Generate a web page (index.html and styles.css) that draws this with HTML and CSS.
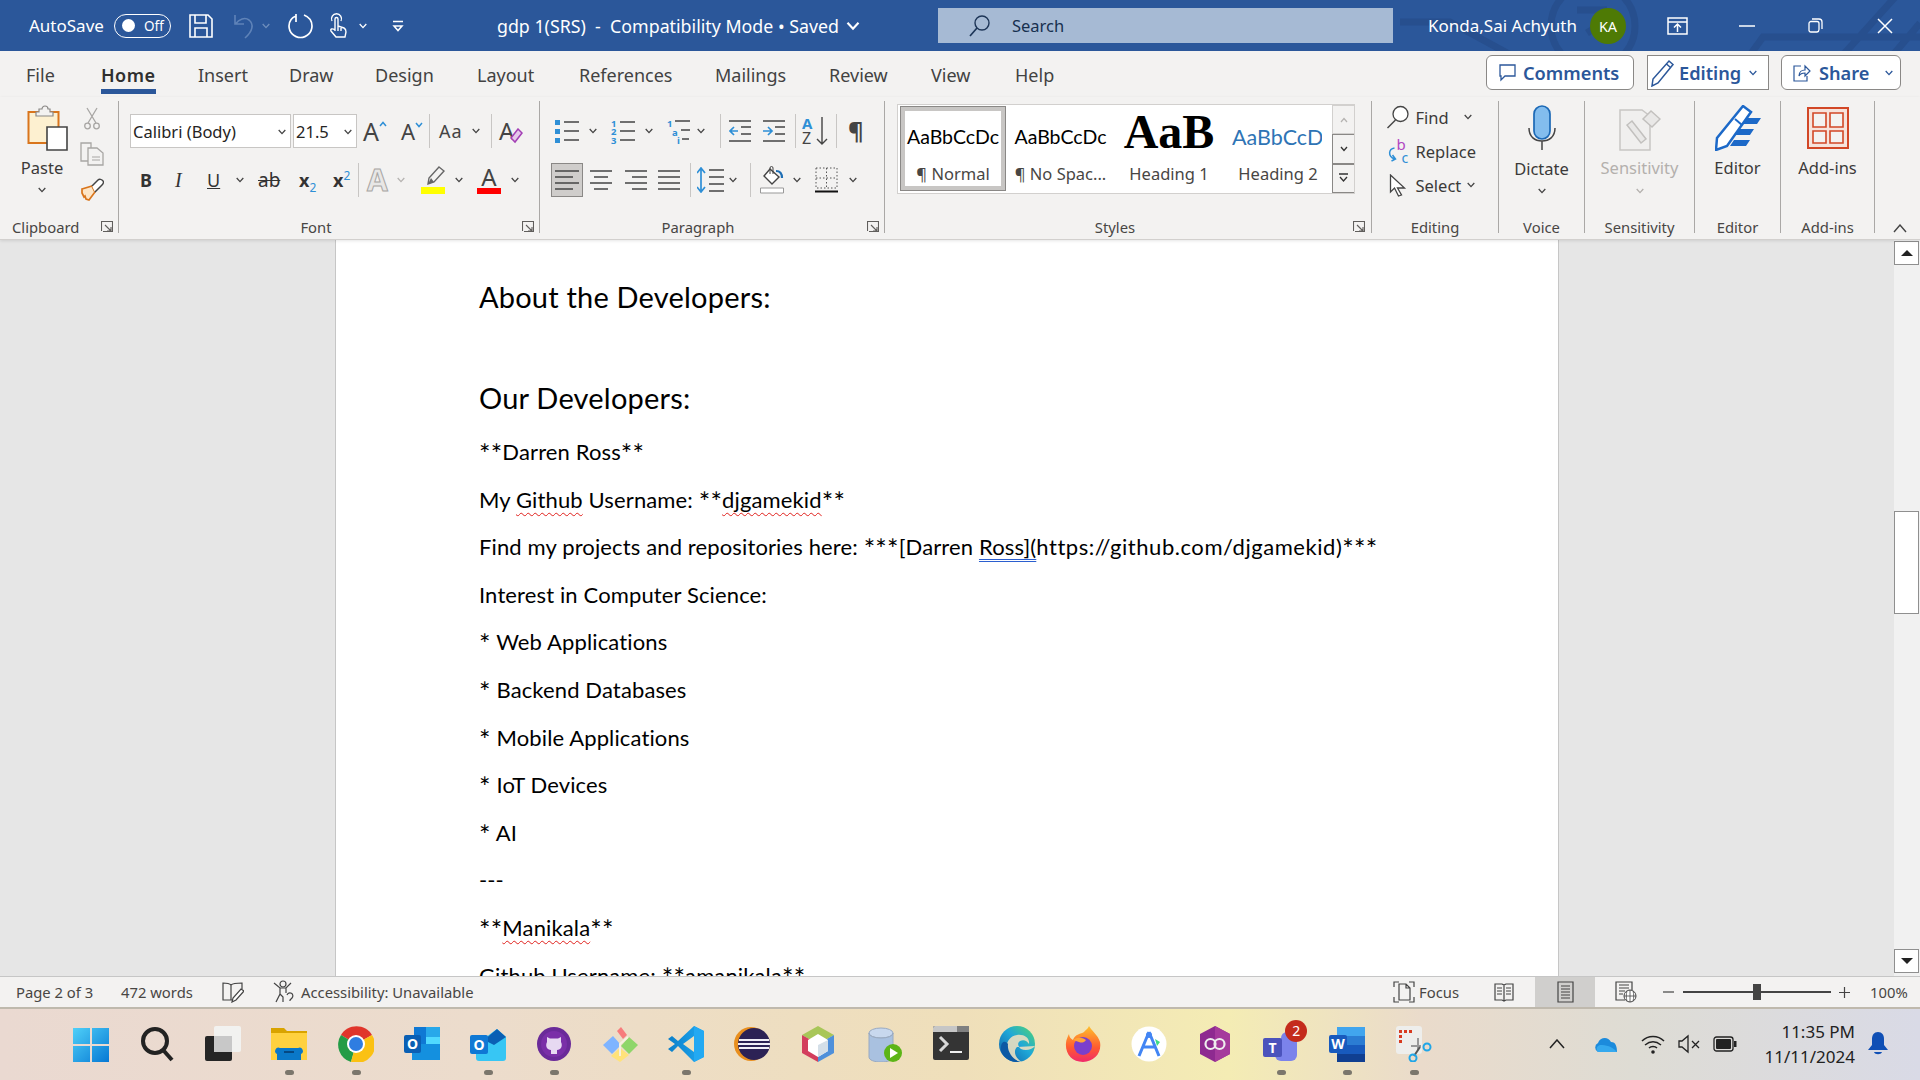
FILE: index.html
```html
<!DOCTYPE html>
<html lang="en">
<head>
<meta charset="utf-8">
<title>gdp 1(SRS) - Word</title>
<link rel="stylesheet" href="styles.css">
</head>
<body>
<svg class="defs" width="0" height="0" aria-hidden="true">
  <defs>
    <symbol id="chev" viewBox="0 0 8 6"><path d="M.7 1 4 4.6 7.3 1" fill="none" stroke="currentColor" stroke-width="1.3"/></symbol>
    <symbol id="launch" viewBox="0 0 12 11"><path d="M.5 10V.5h11M4 .5h7.5V10.500H2M4 4l6 6M10 6v4H6" fill="none" stroke="#605e5c" stroke-width="1.1"/></symbol>
    <linearGradient id="winG" x1="0" y1="0" x2="1" y2="1"><stop offset="0" stop-color="#4fd0f8"/><stop offset="1" stop-color="#0678d4"/></linearGradient>
    <linearGradient id="vsG" x1="0" y1="0" x2="1" y2="0"><stop offset="0" stop-color="#0b7fc9"/><stop offset="1" stop-color="#1fa8f1"/></linearGradient>
    <linearGradient id="edgeG" x1="0" y1="1" x2="1" y2="0"><stop offset="0" stop-color="#0c59a4"/><stop offset=".55" stop-color="#1fa8d8"/><stop offset="1" stop-color="#52d66e"/></linearGradient>
    <linearGradient id="fxG" x1="0" y1="0" x2="0" y2="1"><stop offset="0" stop-color="#ffc02c"/><stop offset=".6" stop-color="#ff5a30"/><stop offset="1" stop-color="#f02a6b"/></linearGradient>
  </defs>
</svg>

<header class="titlebar">
  <svg class="watermark" width="920" height="51" viewBox="0 0 920 51" aria-hidden="true">
    <g fill="none" stroke="#274f8e" stroke-width="7">
      <path d="M400 22H450L520 60"/>
      <circle cx="593" cy="26" r="42"/>
      <path d="M577 10H607M587 33 610 18"/>
      <path d="M750 55 763 37H920M843 55 897-5M893 55 920 23"/>
    </g>
  </svg>
  <span class="tb-text">AutoSave</span>
  <span class="toggle"><i class="knob"></i><span class="toggle-label">Off</span></span>
  <svg width="24" height="24" viewBox="0 0 24 24"><path d="M1 1h18l4 4v18H1zM6 1v8h11V1M6 23v-9h12v9" fill="none" stroke="#fff" stroke-width="1.6"/></svg>
  <svg width="22" height="26" viewBox="0 0 22 26"><path d="M2 2v9h9M2.500 11C6 6 12 4 16 7c5 4 4 11-4 18" fill="none" stroke="#5f83b8" stroke-width="1.600"/></svg>
  <svg class="chev dim" width="8" height="6"><use href="#chev"/></svg>
  <svg width="25" height="26" viewBox="0 0 25 26"><path d="M8 3C3 5 1 9 1 13a11.500 11.500 0 1 0 23 0C24 8 21 4 16 2M8 1v8" fill="none" stroke="#fff" stroke-width="1.700"/></svg>
  <svg width="18" height="26" viewBox="0 0 18 26"><path d="M3 8a5 5 0 1 1 9 0M6 18V6a1.500 1.500 0 0 1 3 0v7l6 2c2 1 2 3 2 4l-1 5H7l-5-6c-1-2 1-3 4-1zM9 13v5M12 14v4" fill="none" stroke="#fff" stroke-width="1.400"/></svg>
  <svg class="chev" width="8" height="6"><use href="#chev"/></svg>
  <svg width="12" height="12" viewBox="0 0 12 12"><path d="M1 1.500h10M2 6l4 4.500L10 6z" fill="none" stroke="#fff" stroke-width="1.500"/></svg>
  <span class="doc-title">gdp 1(SRS)&nbsp; -&nbsp; Compatibility Mode • Saved <svg class="title-chev" width="16" height="10"><use href="#chev"/></svg></span>
  <div class="search">
    <svg width="21" height="24" viewBox="0 0 21 24"><circle cx="13" cy="9" r="7" fill="none" stroke="#1d3557" stroke-width="1.400"/><path d="M8 14 1 22" stroke="#1d3557" stroke-width="1.600"/></svg>
    <span>Search</span>
  </div>
  <span class="tb-text user">Konda,Sai Achyuth</span>
  <span class="avatar">KA</span>
  <svg width="21" height="18" viewBox="0 0 21 18"><path d="M1 1h19v16H1zM1 5h19M10.500 15V7.500M7 10.500l3.500-3.500 3.500 3.500" fill="none" stroke="#fff" stroke-width="1.500"/></svg>
  <svg width="16" height="2" viewBox="0 0 16 2"><path d="M0 1h16" stroke="#fff" stroke-width="1.500"/></svg>
  <svg width="15" height="15" viewBox="0 0 15 15"><path d="M1 5.500a2 2 0 0 1 2-2h6a2 2 0 0 1 2 2v6a2.500 2.500 0 0 1-2 2.500H3a2 2 0 0 1-2-2.500zM4 1h7a3 3 0 0 1 3 3v7" fill="none" stroke="#fff" stroke-width="1.300"/></svg>
  <svg width="16" height="16" viewBox="0 0 16 16"><path d="M1 1l14 14M15 1 1 15" stroke="#fff" stroke-width="1.500"/></svg>
</header>

<nav class="tabs">
  <span class="tab">File</span>
  <span class="tab tab-active">Home</span>
  <span class="tab">Insert</span>
  <span class="tab">Draw</span>
  <span class="tab">Design</span>
  <span class="tab">Layout</span>
  <span class="tab">References</span>
  <span class="tab">Mailings</span>
  <span class="tab">Review</span>
  <span class="tab">View</span>
  <span class="tab">Help</span>
  <button class="action action-comments"><svg width="17" height="18" viewBox="0 0 17 18"><path d="M1 1h15v11H6l-4 4v-4H1z" fill="none" stroke="#2b579a" stroke-width="1.300"/></svg>Comments</button>
  <button class="action action-editing"><svg width="24" height="28" viewBox="0 0 24 28"><path d="M18 2l4 3.500L7 24l-6 3 1-7zM15.500 5l4 3.500" fill="none" stroke="#2b579a" stroke-width="1.500"/></svg>Editing<svg class="chev" width="8" height="6"><use href="#chev"/></svg></button>
  <button class="action action-share"><svg width="18" height="18" viewBox="0 0 18 18"><path d="M8 2H1v15h13v-5M6 12c0-4 3-6 6-6V2l5 5-5 5V9c-3 0-5 1-6 3z" fill="none" stroke="#2b579a" stroke-width="1.200"/></svg>Share<svg class="chev share-chev" width="8" height="6"><use href="#chev"/></svg></button>
</nav>

<section class="ribbon">
  <div class="group g-clip">
    <div class="body clip-body">
      <div class="big paste">
        <svg class="paste-icon" width="41" height="46" viewBox="0 0 41 46"><path d="M1.500 7h30v31h-30z" fill="#fdf0d0" stroke="#d9751c" stroke-width="2"/><path d="M12 7V4h3a3 3 0 0 1 6 0h2v3h3v4H9V7z" fill="#f3f2f1" stroke="#8a8886" stroke-width="1.200"/><path d="M20 22h20v23H20z" fill="#fff" stroke="#444" stroke-width="1.600"/></svg>
        <span class="big-label">Paste</span>
        <svg class="chev" width="8" height="6"><use href="#chev"/></svg>
      </div>
      <div class="clip-small">
        <svg width="16" height="23" viewBox="0 0 16 23"><g fill="none" stroke="#a8a6a4" stroke-width="1.300"><path d="M3 1l9 15M13 1 4 16"/><circle cx="3.500" cy="19" r="2.800"/><circle cx="12.500" cy="19" r="2.800"/></g></svg>
        <svg width="24" height="24" viewBox="0 0 24 24"><g fill="#f3f2f1" stroke="#a8a6a4" stroke-width="1.300"><path d="M1 1h10v18H1z"/><path d="M8 6h9l6 5v12H8z"/></g><path d="M12 15h8M12 18h8" stroke="#a8a6a4"/></svg>
        <svg width="24" height="23" viewBox="0 0 24 23"><path d="M2 11l10-3 3 6-6 8-3-1-1-3-1 1-2-4z" fill="#fde6c8" stroke="#d9751c" stroke-width="1.700"/><path d="M12 8l6-6c1-1 4-1 5 1 1 1 0 3-1 4l-7 7" fill="#fff" stroke="#444" stroke-width="1.500"/></svg>
      </div>
    </div>
    <div class="label">Clipboard</div>
    <svg class="launch" width="12" height="11"><use href="#launch"/></svg>
  </div>

  <div class="group g-font">
    <div class="body">
      <div class="row font-row1">
        <div class="combo combo-font">Calibri (Body)<svg class="chev" width="8" height="6"><use href="#chev"/></svg></div>
        <div class="combo combo-size">21.5<svg class="chev" width="8" height="6"><use href="#chev"/></svg></div>
        <span class="grow-a">A<svg class="mini" width="8" height="6" viewBox="0 0 8 6"><path d="M1 5l3-3.500L7 5" fill="none" stroke="#2e8fd6" stroke-width="1.500"/></svg></span>
        <span class="shrink-a">A<svg class="mini" width="8" height="6" viewBox="0 0 8 6"><path d="M1 1l3 3.500L7 1" fill="none" stroke="#2e8fd6" stroke-width="1.500"/></svg></span>
        <i class="sep"></i>
        <span class="case">Aa</span>
        <svg class="chev" width="8" height="6"><use href="#chev"/></svg>
        <i class="sep"></i>
        <span class="clear"><span class="clear-a">A</span><svg width="14" height="16" viewBox="0 0 14 16"><path d="M9 1l4 4-7 9-4-4z" fill="#e5c8ea" stroke="#a33fb5" stroke-width="1.500"/></svg></span>
      </div>
      <div class="row font-row2">
        <b class="fmt">B</b>
        <i class="fmt fmt-i">I</i>
        <u class="fmt">U</u>
        <svg class="chev" width="8" height="6"><use href="#chev"/></svg>
        <s class="fmt fmt-ab">ab</s>
        <span class="fmt fmt-b">x<sub>2</sub></span>
        <span class="fmt fmt-b">x<sup>2</sup></span>
        <i class="sep"></i>
        <span class="fx-a">A</span>
        <svg class="chev dim2" width="8" height="6"><use href="#chev"/></svg>
        <svg width="24" height="28" viewBox="0 0 24 28"><path d="M18 1l5 4-10 11-6 2 1-6z" fill="none" stroke="#666" stroke-width="1.400"/><path d="M7 18l6-2-3-4z" fill="#666"/><path d="M0 21h24v7H0z" fill="#ffff00"/></svg>
        <svg class="chev" width="8" height="6"><use href="#chev"/></svg>
        <span class="color-a">A<i class="color-bar"></i></span>
        <svg class="chev" width="8" height="6"><use href="#chev"/></svg>
      </div>
    </div>
    <div class="label">Font</div>
    <svg class="launch" width="12" height="11"><use href="#launch"/></svg>
  </div>

  <div class="group g-para">
    <div class="body">
      <div class="row para-row1">
        <svg width="24" height="24" viewBox="0 0 24 24"><path d="M0 1h5v5H0zM0 10h5v5H0zM0 19h5v5H0z" fill="#2e8fd6"/><path d="M9 3h15M9 12h15M9 21h15" stroke="#444" stroke-width="1.400"/></svg>
        <svg class="chev" width="8" height="6"><use href="#chev"/></svg>
        <svg width="24" height="26" viewBox="0 0 24 26"><text x="0" y="9" class="mini-num">1</text><text x="0" y="17" class="mini-num">2</text><text x="0" y="26" class="mini-num">3</text><path d="M9 4h15M9 13h15M9 22h15" stroke="#444" stroke-width="1.400"/></svg>
        <svg class="chev" width="8" height="6"><use href="#chev"/></svg>
        <svg width="24" height="26" viewBox="0 0 24 26"><text x="0" y="9" class="mini-num">1</text><text x="5" y="18" class="mini-num">a</text><text x="10" y="26" class="mini-num">i</text><path d="M8 3h15M14 12h9M15 21h7" stroke="#444" stroke-width="1.400"/></svg>
        <svg class="chev" width="8" height="6"><use href="#chev"/></svg>
        <i class="sep"></i>
        <svg width="22" height="24" viewBox="0 0 22 24"><path d="M0 2h22M12 8h10M12 15h10M0 22h22" stroke="#444" stroke-width="1.400"/><path d="M9 12H1M5 8l-4 4 4 4" fill="none" stroke="#2e8fd6" stroke-width="1.700"/></svg>
        <svg width="22" height="24" viewBox="0 0 22 24"><path d="M0 2h22M12 8h10M12 15h10M0 22h22" stroke="#444" stroke-width="1.400"/><path d="M0 12h8M5 8l4 4-4 4" fill="none" stroke="#2e8fd6" stroke-width="1.700"/></svg>
        <i class="sep"></i>
        <svg width="26" height="30" viewBox="0 0 26 30"><text x="0" y="13" class="sort-a">A</text><text x="0" y="28" class="sort-z">Z</text><path d="M20 1v27M15 23l5 5 5-5" fill="none" stroke="#444" stroke-width="1.400"/></svg>
        <i class="sep"></i>
        <span class="pilcrow">¶</span>
      </div>
      <div class="row para-row2">
        <span class="align-on"><svg width="24" height="24" viewBox="0 0 24 24"><path d="M0 3h24M0 9h18M0 15h24M0 21h18" stroke="#444" stroke-width="1.400"/></svg></span>
        <svg width="22" height="24" viewBox="0 0 22 24"><path d="M0 3h22M4 9h14M0 15h22M4 21h14" stroke="#444" stroke-width="1.400"/></svg>
        <svg width="22" height="24" viewBox="0 0 22 24"><path d="M0 3h22M7 9h15M0 15h22M7 21h15" stroke="#444" stroke-width="1.400"/></svg>
        <svg width="22" height="24" viewBox="0 0 22 24"><path d="M0 3h22M0 9h22M0 15h22M0 21h22" stroke="#444" stroke-width="1.400"/></svg>
        <i class="sep"></i>
        <svg width="27" height="26" viewBox="0 0 27 26"><path d="M4 2v22M0 6l4-5 4 5M0 20l4 5 4-5" fill="none" stroke="#2e8fd6" stroke-width="1.700"/><path d="M12 3h15M12 10h15M12 17h15M12 24h15" stroke="#444" stroke-width="1.400"/></svg>
        <svg class="chev" width="8" height="6"><use href="#chev"/></svg>
        <i class="sep"></i>
        <svg width="24" height="28" viewBox="0 0 24 28"><path d="M10 3l9 8-7 7-8-8z" fill="#fff" stroke="#444" stroke-width="1.400"/><path d="M10 8V2a1.500 1.500 0 0 1 3 0v6" fill="none" stroke="#444"/><path d="M16 5c4 0 6 2 6 7" fill="none" stroke="#1f6fb5" stroke-width="2.200"/><path d="M.5 22h23v5H.5z" fill="#fff" stroke="#999"/></svg>
        <svg class="chev" width="8" height="6"><use href="#chev"/></svg>
        <svg width="23" height="28" viewBox="0 0 23 28"><path d="M1 2h21v20H1zM11.500 2v20M1 12h21" fill="none" stroke="#555" stroke-dasharray="1.500 2"/><path d="M0 25.500h23" stroke="#111" stroke-width="2"/></svg>
        <svg class="chev" width="8" height="6"><use href="#chev"/></svg>
      </div>
    </div>
    <div class="label">Paragraph</div>
    <svg class="launch" width="12" height="11"><use href="#launch"/></svg>
  </div>

  <div class="group g-styles">
    <div class="body">
      <div class="gallery">
        <div class="style style-normal">
          <span class="sample s-normal">AaBbCcDc</span>
          <span class="style-name">¶ Normal</span>
        </div>
        <div class="style style-nospace">
          <span class="sample s-normal">AaBbCcDc</span>
          <span class="style-name">¶ No Spac...</span>
        </div>
        <div class="style style-h1">
          <span class="sample s-h1">AaB</span>
          <span class="style-name">Heading 1</span>
        </div>
        <div class="style style-h2">
          <span class="sample s-h2">AaBbCcDc</span>
          <span class="style-name">Heading 2</span>
        </div>
        <div class="gallery-scroll">
          <span class="gs gs-up"><svg width="10" height="6" viewBox="0 0 8 6"><path d="M1 5l3-3.500L7 5" fill="none" stroke="#b5b3b1" stroke-width="1.200"/></svg></span>
          <span class="gs"><svg width="10" height="6" viewBox="0 0 8 6"><path d="M1 1l3 3.500L7 1" fill="none" stroke="#333" stroke-width="1.300"/></svg></span>
          <span class="gs"><svg width="11" height="10" viewBox="0 0 11 10"><path d="M1 1h9M2 4l3.500 4L9 4" fill="none" stroke="#333" stroke-width="1.300"/></svg></span>
        </div>
      </div>
    </div>
    <div class="label">Styles</div>
    <svg class="launch" width="12" height="11"><use href="#launch"/></svg>
  </div>

  <div class="group g-edit">
    <div class="body edit-body">
      <div class="edit-row">
        <svg width="23" height="24" viewBox="0 0 23 24"><circle cx="14" cy="9" r="7.500" fill="#fff" stroke="#444" stroke-width="1.300"/><path d="M9 15 1 23" stroke="#444" stroke-width="1.500"/></svg>
        <span>Find</span>
        <svg class="chev" width="8" height="6"><use href="#chev"/></svg>
      </div>
      <div class="edit-row">
        <svg width="23" height="25" viewBox="0 0 23 25"><text x="10" y="11" class="rep-b">b</text><text x="15" y="24" class="rep-c">c</text><path d="M8 9C2 10 1 17 8 20M6 16l3 4-4 2" fill="none" stroke="#2e8fd6" stroke-width="1.500"/></svg>
        <span>Replace</span>
      </div>
      <div class="edit-row">
        <svg width="17" height="23" viewBox="0 0 17 23"><path d="M1 1v17l4-4 4 8 3-1-4-7h7z" fill="#fff" stroke="#444" stroke-width="1.300"/></svg>
        <span class="sel-text">Select</span>
        <svg class="chev" width="8" height="6"><use href="#chev"/></svg>
      </div>
    </div>
    <div class="label">Editing</div>
  </div>

  <div class="group g-voice">
    <div class="body big">
      <svg width="28" height="46" viewBox="0 0 28 46"><rect x="6" y="1" width="16" height="33" rx="8" fill="#83bdee" stroke="#1c69b6" stroke-width="1.700"/><path d="M1 23c0 9 6 13 13 13s13-4 13-13M14 36v9" fill="none" stroke="#444" stroke-width="1.500"/></svg>
      <span class="big-label">Dictate</span>
      <svg class="chev" width="8" height="6"><use href="#chev"/></svg>
    </div>
    <div class="label">Voice</div>
  </div>

  <div class="group g-sens">
    <div class="body big muted">
      <svg width="42" height="46" viewBox="0 0 42 46"><path d="M1 5h22l8 6v34H1z" fill="#f0efee" stroke="#c8c6c4" stroke-width="1.500"/><path d="M8 20 22 38l5-4L13 16zM24 14l8-8 9 8-8 8z" fill="#e9e8e7" stroke="#c2c0be" stroke-width="1.500"/></svg>
      <span class="big-label">Sensitivity</span>
      <svg class="chev" width="8" height="6"><use href="#chev"/></svg>
    </div>
    <div class="label">Sensitivity</div>
  </div>

  <div class="group g-editor">
    <div class="body big">
      <svg width="46" height="46" viewBox="0 0 46 46"><path d="M29 13h17l-4 6H25zM24 24h15l-4 6H20zM19 35h16l-4 6H15z" fill="#1c69c8"/><path d="M28 1l8 6L12 41 1 45l1-12z" fill="#fff" stroke="#1c69c8" stroke-width="2.500"/><path d="M20 14l7 6" stroke="#1c69c8" stroke-width="2"/></svg>
      <span class="big-label">Editor</span>
    </div>
    <div class="label">Editor</div>
  </div>

  <div class="group g-addins">
    <div class="body big">
      <svg width="42" height="42" viewBox="0 0 42 42"><path d="M1 1h40v40H1z" fill="#f6e3dc" stroke="#d24726" stroke-width="2"/><path d="M6 6h13v14H6zM23 6h13v14H23zM6 24h13v12H6zM23 24h13v12H23z" fill="#f3f2f1" stroke="#d24726" stroke-width="1.600"/></svg>
      <span class="big-label">Add-ins</span>
    </div>
    <div class="label">Add-ins</div>
  </div>
  <svg class="collapse" width="14" height="9" viewBox="0 0 14 9"><path d="M1 8l6-7 6 7" fill="none" stroke="#444" stroke-width="1.400"/></svg>
</section>

<main class="workspace">
  <div class="gutter"></div>
  <article class="page">
    <h1 class="h-first">About the Developers:</h1>
    <h1 class="h-second">Our Developers:</h1>
    <p><span class="ast">**</span>Darren Ross<span class="ast">**</span></p>
    <p>My <span class="err">Github</span> Username: <span class="ast">**</span><span class="err">djgamekid</span><span class="ast">**</span></p>
    <p>Find my projects and repositories here: <span class="ast">***</span>[Darren <span class="gram">Ross](</span><span class="url">https://github.com/djgamekid)</span><span class="ast">***</span></p>
    <p>Interest in Computer Science:</p>
    <p><span class="ast">*</span> Web Applications</p>
    <p><span class="ast">*</span> Backend Databases</p>
    <p><span class="ast">*</span> Mobile Applications</p>
    <p><span class="ast">*</span> IoT Devices</p>
    <p><span class="ast">*</span> AI</p>
    <p>---</p>
    <p><span class="ast">**</span><span class="err">Manikala</span><span class="ast">**</span></p>
    <p>Github Username: <span class="ast">**</span>amanikala<span class="ast">**</span></p>
  </article>
  <div class="side">
    <div class="scrollbar">
      <span class="sb-btn"><i class="tri-up"></i></span>
      <span class="sb-thumb"></span>
      <span class="sb-btn sb-down"><i class="tri-down"></i></span>
    </div>
  </div>
</main>

<footer class="status">
  <span>Page 2 of 3</span>
  <span>472 words</span>
  <svg width="22" height="22" viewBox="0 0 22 22"><path d="M1 2c3 0 6 0 8 2v15H1zM9 4c2-2 5-2 11-2v6M9 19h3" fill="none" stroke="#444" stroke-width="1.200"/><path d="M19 8l3 2-8 9-4 2 1-4z" fill="#fff" stroke="#444" stroke-width="1.200"/></svg>
  <span class="st-inline"><svg width="24" height="24" viewBox="0 0 24 24"><g fill="none" stroke="#444" stroke-width="1.200"><circle cx="10" cy="4" r="3"/><path d="M1 3l6 5h6l5-5M7 8v6l-4 8M13 8v5M7 14l3 3v5"/><path d="M14 15a3 3 0 1 1 5 3l-2 2v1"/></g></svg>Accessibility: Unavailable</span>
  <span class="st-inline"><svg width="22" height="22" viewBox="0 0 22 22"><path d="M1 6V1h5M16 1h5v5M1 16v5h5M21 16v5h-5M6 3h7l4 4v12H6zM13 3v4h4" fill="none" stroke="#444" stroke-width="1.200"/></svg>Focus</span>
  <svg width="20" height="20" viewBox="0 0 20 20"><path d="M1 2h7l2 1 2-1h7v16h-7l-2 1-2-1H1zM10 3v16M3 6h5M3 9h5M3 12h5M12 6h5M12 9h5M12 12h5" fill="none" stroke="#444" stroke-width="1.200"/></svg>
  <span class="view-on"><svg width="17" height="22" viewBox="0 0 17 22"><path d="M1 1h15v20H1zM4 5h9M4 8h9M4 11h9M4 14h9M4 17h9" fill="none" stroke="#444" stroke-width="1.200"/></svg></span>
  <svg width="22" height="22" viewBox="0 0 22 22"><path d="M10 19H1V1h16v8M4 4h10M4 7h10M4 10h6M4 13h4" fill="none" stroke="#444" stroke-width="1.200"/><g fill="#fff" stroke="#444"><circle cx="15" cy="15" r="6"/></g><path d="M9 15h12M15 9v12M12 10c-1 3-1 7 0 10M18 10c1 3 1 7 0 10" fill="none" stroke="#444" stroke-width=".8"/></svg>
  <svg width="11" height="2" viewBox="0 0 11 2"><path d="M0 1h11" stroke="#444" stroke-width="1.200"/></svg>
  <div class="zoom-track"><i class="zoom-thumb"></i></div>
  <svg width="11" height="11" viewBox="0 0 11 11"><path d="M0 5.500h11M5.500 0v11" stroke="#444" stroke-width="1.200"/></svg>
  <span>100%</span>
</footer>

<footer class="taskbar">
  <div class="task-icons">
    <span class="ti"><svg width="36" height="36" viewBox="0 0 36 36"><path d="M0 2h17v16H0zM19 2h17v16H19zM0 20h17v16H0zM19 20h17v16H19z" fill="url(#winG)"/></svg></span>
    <span class="ti"><svg width="36" height="36" viewBox="0 0 36 36"><circle cx="16" cy="15" r="12" fill="none" stroke="#222" stroke-width="4"/><path d="M25 25l8 9" stroke="#222" stroke-width="4"/></svg></span>
    <span class="ti"><svg width="36" height="36" viewBox="0 0 36 36"><rect x="9" y="0" width="27" height="26" rx="2" fill="#f2f2f0"/><rect x="0" y="10" width="27" height="25" rx="2" fill="#252525"/><rect x="9" y="10" width="18" height="16" fill="#c8c8c8"/></svg></span>
    <span class="ti dot"><svg width="36" height="34" viewBox="0 0 36 34"><path d="M0 2h13l3 3h20v29H0z" fill="#d9a300"/><path d="M0 7h36v27H0z" fill="#ffd13f"/><path d="M6 28a3 3 0 0 1 3-6h18a3 3 0 0 1 3 6v6H6z" fill="#0a78c8"/><path d="M13 26h10" stroke="#05386b" stroke-width="1.500"/></svg></span>
    <span class="ti dot"><svg width="36" height="36" viewBox="0 0 36 36"><path d="M18 18 3 9A18 18 0 0 1 34 9z" fill="#e0352b"/><path d="M18 18 3 9a18 18 0 0 0 10 27z" fill="#249c47"/><path d="M18 18 34 9a18 18 0 0 1-21 27z" fill="#fbc113"/><circle cx="18" cy="18" r="9" fill="#fff"/><circle cx="18" cy="18" r="7" fill="#2f7de1"/></svg></span>
    <span class="ti"><svg width="36" height="36" viewBox="0 0 36 36"><path d="M10 1h26v32H10z" fill="#0f78d4"/><path d="M22 1h14v10H22z" fill="#28a8ea"/><path d="M22 11h14v11H22z" fill="#50d9ff"/><path d="M8 18h28v16H8z" fill="#1490df"/><rect x="0" y="9" width="17" height="18" rx="2" fill="#0a5fb4"/><text x="8.500" y="23" class="ti-letter">O</text></svg></span>
    <span class="ti dot"><svg width="36" height="36" viewBox="0 0 36 36"><path d="M12 14 27 3l9 8v21a3 3 0 0 1-3 3H9a3 3 0 0 1-3-3V14z" fill="#37c6f4"/><path d="M14 14 27 3l9 8-12 8z" fill="#0a5fb4"/><rect x="0" y="9" width="18" height="19" rx="2" fill="#0f78d4"/><text x="9" y="24" class="ti-letter">O</text></svg></span>
    <span class="ti dot"><svg width="36" height="36" viewBox="0 0 36 36"><circle cx="18" cy="18" r="17" fill="#6a2a99"/><circle cx="18" cy="18" r="13" fill="#7a2fa8"/><path d="M11 11l3 1.500h8L25 11v5c2 4 0 8-4 8v4h-6v-4c-4 0-6-4-4-8z" fill="#e7d9f2"/></svg></span>
    <span class="ti"><svg width="36" height="36" viewBox="0 0 36 36"><path d="M11 10 1 19l9 9 9-9z" fill="#7fb4ff"/><path d="M18 22 9 30l9 6 9-7z" fill="#ffe27a"/><path d="M27 11l9 8-9 9-8-8z" fill="#8fd66a"/><path d="M19 1l-4 4 6 8 4-4z" fill="#f77c7c"/><path d="M18 30V18l8-7" fill="none" stroke="#f5f0e0" stroke-width="2"/></svg></span>
    <span class="ti dot"><svg width="36" height="36" viewBox="0 0 36 36"><path d="M26 0 36 5v26l-10 5L10 20l-6 6-4-3 7-5-7-5 4-3 6 5z" fill="url(#vsG)"/><path d="M26 0v36l10-5V5z" fill="#23a9f2"/><path d="M26 10 15 18l11 8z" fill="#efe0bd"/></svg></span>
    <span class="ti"><svg width="36" height="36" viewBox="0 0 36 36"><circle cx="17" cy="18" r="17" fill="#e98f1e"/><circle cx="20" cy="18" r="16" fill="#2c2255"/><path d="M5 13h30v2H5zM4 17h32v2H4zM5 21h30v2H5z" fill="#f1eff8"/></svg></span>
    <span class="ti"><svg width="36" height="36" viewBox="0 0 36 36"><path d="M18 0 34 9 18 18 2 9z" fill="#a8c658"/><path d="M2 9v18l16 9V18z" fill="#d33e5d"/><path d="M34 9v18l-16 9V18z" fill="#4f90da"/><path d="M18 8l10 6v11l-10 6-10-6V14z" fill="#fff"/><path d="M18 19l10-5v11l-10 6z" fill="#d4dfe8"/></svg></span>
    <span class="ti"><svg width="36" height="36" viewBox="0 0 36 36"><ellipse cx="14" cy="7" rx="12" ry="5" fill="#c8d8ee" stroke="#99aac2"/><path d="M2 7v24c0 3 5 5 12 5s12-2 12-5V7c0 3-5 5-12 5S2 10 2 7z" fill="#a9c1e0" stroke="#99aac2"/><circle cx="26" cy="27" r="9" fill="#5cb517"/><path d="M23 22l8 5-8 5z" fill="#fff"/></svg></span>
    <span class="ti"><svg width="36" height="34" viewBox="0 0 36 34"><rect width="36" height="34" rx="2" fill="#343434"/><path d="M0 2a2 2 0 0 1 2-2h10v6H0zM12 0h12v6H12z" fill="#c6c6c6"/><path d="M24 0h12v6H24z" fill="#808080"/><path d="M7 11l7 7-7 7" fill="none" stroke="#d8d8d8" stroke-width="3"/><path d="M17 25h12v2H17z" fill="#eee"/></svg></span>
    <span class="ti"><svg width="36" height="36" viewBox="0 0 36 36"><circle cx="18" cy="18" r="18" fill="url(#edgeG)"/><path d="M36 20c-3 4-10 5-14 3-3-2-4-6-1-8 4-2 7 0 9 3 1-6-5-10-12-9-7 1-11 7-10 13 1 7 7 14 15 14-7-4-9-11-5-15" fill="#eadfc0" opacity=".9"/><path d="M9 18c-1 7 4 15 12 18-8 1-16-3-19-11-1-8 3-12 7-7z" fill="#0c59a4"/></svg></span>
    <span class="ti"><svg width="36" height="36" viewBox="0 0 36 36"><path d="M24 0c2 4 9 9 11 16 2 11-6 20-17 20S0 28 1 17c0-3 2-7 3-9 0 3 2 5 4 6 2-6 8-6 11-8 1-2 4-3 5-6z" fill="url(#fxG)"/><circle cx="18" cy="20" r="9" fill="#7a3fcc"/><path d="M8 14c4-3 9-3 13 0-2 3-5 3-7 2" fill="#ffa436"/></svg></span>
    <span class="ti"><svg width="36" height="36" viewBox="0 0 36 36"><circle cx="18" cy="18" r="17.500" fill="#fff"/><path d="M18 6 8 30M18 6l10 24M12 21h12" fill="none" stroke="#4285f4" stroke-width="3"/><circle cx="18" cy="9" r="3" fill="#4285f4"/><path d="M24 13l5 3-3 4z" fill="#3ddc84"/></svg></span>
    <span class="ti"><svg width="36" height="36" viewBox="0 0 36 36"><path d="M18 0 33 8v20l-15 8-15-8V8z" fill="#8e2a90"/><path d="M18 0 33 8v20l-15 8z" fill="#a53a9c"/><circle cx="13.500" cy="18" r="5" fill="none" stroke="#eee" stroke-width="2.200"/><circle cx="22.500" cy="18" r="5" fill="none" stroke="#eee" stroke-width="2.200"/></svg></span>
    <span class="ti dot"><svg width="36" height="36" viewBox="0 0 36 36"><circle cx="24" cy="12" r="6" fill="#7b83eb"/><path d="M12 15h22v14a6 6 0 0 1-6 6H18a6 6 0 0 1-6-6z" fill="#7b83eb"/><rect x="0" y="12" width="19" height="19" rx="2" fill="#4b53bc"/><text x="9.500" y="27" class="ti-letter">T</text></svg><em class="badge">2</em></span>
    <span class="ti dot"><svg width="36" height="36" viewBox="0 0 36 36"><path d="M8 1h28v9H8z" fill="#41a5ee"/><path d="M8 10h28v9H8z" fill="#2b7cd3"/><path d="M8 19h28v9H8z" fill="#185abd"/><path d="M8 28h28v8H8z" fill="#103f91"/><rect x="0" y="9" width="18" height="18" rx="2" fill="#185abd"/><text x="9" y="23" class="ti-letter">W</text></svg></span>
    <span class="ti dot"><svg width="36" height="36" viewBox="0 0 36 36"><rect width="26" height="28" rx="3" fill="#eeeeec"/><path d="M3 4h3v3H3zM8 4h3v3H8zM13 4h3v3h-3zM3 9h3v3H3zM3 14h3v3H3z" fill="#d83b20"/><path d="M15 20h10M22 12v12" stroke="#999" stroke-width="2"/><path d="M24 21l-6 9" stroke="#555" stroke-width="2"/><circle cx="31" cy="21" r="3.500" fill="none" stroke="#1fa6e8" stroke-width="2"/><circle cx="17" cy="32" r="3.500" fill="none" stroke="#1fa6e8" stroke-width="2"/></svg></span>
  </div>
  <div class="tray">
    <svg width="16" height="10" viewBox="0 0 16 10"><path d="M1 9l7-8 7 8" fill="none" stroke="#222" stroke-width="1.500"/></svg>
    <svg width="24" height="16" viewBox="0 0 24 16"><path d="M5 16a5 5 0 0 1 0-9c2-6 10-7 13-1 5 0 6 5 6 10z" fill="#1c8bdc"/><path d="M5 16a4 4 0 0 1 2-7c6 0 12 1 17 7z" fill="#35a9ee"/></svg>
    <svg width="24" height="20" viewBox="0 0 24 20"><path d="M1 7c6-6 16-6 22 0M4 11c5-4 11-4 16 0M8 14c2-2 6-2 8 0" fill="none" stroke="#222" stroke-width="1.500"/><circle cx="12" cy="18" r="1.800" fill="#222"/></svg>
    <svg width="22" height="20" viewBox="0 0 22 20"><path d="M1 7h3l6-5v16l-6-5H1zM14 7l7 7M21 7l-7 7" fill="none" stroke="#222" stroke-width="1.300"/></svg>
    <svg width="24" height="16" viewBox="0 0 24 16"><rect x="1" y="1" width="19" height="14" rx="2.500" fill="none" stroke="#222" stroke-width="1.300"/><rect x="3" y="3" width="15" height="10" rx="1" fill="#222"/><path d="M21 5h2.500v6H21z" fill="#222"/></svg>
    <div class="clock"><span>11:35 PM</span><span>11/11/2024</span></div>
    <svg width="20" height="24" viewBox="0 0 20 24"><path d="M10 0c4 0 6 3 6 7v6l4 5H0l4-5V7c0-4 2-7 6-7z" fill="#0f4fb5"/><path d="M6 20h8c-1 3-7 3-8 0z" fill="#0f4fb5"/></svg>
  </div>
</footer>
</body>
</html>
```

FILE: styles.css
```css
* { box-sizing: border-box; }
html, body { margin: 0; padding: 0; }
body {
  width: 1920px; height: 1080px; overflow: hidden;
  font-family: "Noto Sans", "Open Sans", sans-serif;
  color: #3b3a39; background: #f3f2f1;
  display: flex; flex-direction: column;
}
.defs { position: absolute; }
svg { display: block; flex: none; }
.chev { color: #444; }
.dim { color: #6f8fbd; }
.dim2 { color: #b5b3b1; }

/* title bar */
.titlebar {
  position: relative; height: 51px; flex: none; background: #2b579a; color: #fff;
  display: grid; align-items: center; justify-items: start; padding-left: 29px;
  grid-template-columns: 85px 75px 44px 29px 26px 41px 30px 33px 105px 441px 490px 162px 77px 72px 69px 69px auto;
  overflow: hidden;
}
.titlebar > * { position: relative; }
.titlebar > .watermark { position: absolute; left: 1000px; top: 0; }
.titlebar .chev { color: #fff; }
.titlebar .dim { color: #6f8fbd; }
.tb-text { font-size: 17px; white-space: nowrap; }
.toggle {
  width: 57px; height: 24px; border: 1.500px solid #fff; border-radius: 12px;
  display: flex; align-items: center; padding-left: 7px; gap: 9px;
}
.knob { width: 13px; height: 13px; background: #fff; border-radius: 50%; }
.toggle-label { font-size: 13.500px; }
.doc-title { font-size: 17.800px; white-space: nowrap; display: flex; align-items: center; gap: 6px; }
.title-chev { color: #fff; }
.search {
  width: 455px; height: 35px; background: #a6bad4; color: #17304f; font-size: 16.500px;
  display: flex; align-items: center; gap: 22px; padding-left: 31px;
}
.avatar {
  width: 36px; height: 36px; border-radius: 50%; background: #4e7a05; color: #fff; font-size: 14.500px;
  display: flex; align-items: center; justify-content: center;
}

/* tabs */
.tabs {
  height: 46px; flex: none; display: grid; padding-left: 26px; align-items: start; justify-items: start;
  grid-template-columns: 75px 97px 91px 86px 102px 102px 136px 114px 102px 84px 471px 161px 134px auto;
  padding-top: 10px; position: relative;
}
.tab { font-size: 18px; line-height: 28px; color: #424242; white-space: nowrap; }
.tab-active { font-weight: 600; color: #2f2f2f; border-bottom: 5px solid #2b579a; height: 33px; letter-spacing: .5px; }
.action {
  margin-top: -6px; height: 35px; background: #fff; border: 1px solid #8a8886; border-radius: 6px; padding: 0;
  color: #2b579a; font: 600 18.200px "Noto Sans", sans-serif; display: flex; align-items: center;
}
.action-comments { width: 148px; padding-left: 12px; gap: 7px; }
.action-editing { width: 122px; padding-left: 3px; gap: 4px; border-radius: 0; }
.action-share { width: 120px; padding-left: 11px; gap: 8px; }
.action .chev { color: #2b579a; }
.action-editing .chev { margin-left: 4px; }
.share-chev { margin-left: 8px; }

/* ribbon */
.ribbon {
  height: 143px; flex: none; display: flex; position: relative;
  border-bottom: 1px solid #d2d0ce; box-shadow: 0 1px 3px rgba(0,0,0,.1); z-index: 1;
}
.group {
  position: relative; margin-top: 4px; height: 132px; border-right: 1px solid #aaa8a6; flex: none;
}
.g-clip { width: 119px; }
.g-font { width: 421px; }
.g-para { width: 345px; }
.g-styles { width: 487px; }
.g-edit { width: 127px; }
.g-voice { width: 86px; }
.g-sens { width: 110px; }
.g-editor { width: 86px; }
.g-addins { width: 94px; }
.body { height: 116px; display: flow-root; }
.label {
  text-align: center; font-size: 14.800px; line-height: 20px; height: 16px; color: #484644; white-space: nowrap;
}
.g-clip .label { text-align: left; padding-left: 12px; }
.g-font .label { padding-right: 26px; }
.g-para .label { padding-right: 28px; }
.g-styles .label { padding-right: 26px; }
.launch { position: absolute; right: 5px; bottom: 1px; }
.g-styles .launch { right: 6px; }
.collapse { position: absolute; right: 13px; bottom: 6px; }

.clip-body { display: grid; grid-template-columns: 78px 24px; padding-left: 6px; }
.paste { padding-top: 6px; width: 72px; }
.paste-icon { margin-left: 10px; }
.big { display: flex; flex-direction: column; align-items: center; padding-top: 4px; }
.big-label { font-size: 16.500px; line-height: 24px; margin-top: 6px; color: #3b3a39; white-space: nowrap; }
.big .chev { margin-top: 7px; }
.paste .big-label { margin-top: 5px; }
.clip-small { display: flex; flex-direction: column; align-items: center; gap: 12px; padding-top: 6px; margin-left: -9px; }

.row { display: grid; align-items: center; justify-items: start; height: 34px; }
.font-row1 { margin-top: 13px; padding-left: 11px; grid-template-columns: 163px 70px 38px 28px 10px 33px 19px 8px auto; }
.font-row2 { margin-top: 15px; padding-left: 21px; grid-template-columns: 35px 32px 29px 22px 41px 34px 25px 9px 30px 24px 34px 22px 34px auto; }
.para-row1 { margin-top: 13px; padding-left: 15px; grid-template-columns: 34px 22px 34px 22px 30px 23px 9px 34px 32px 7px 34px 12px auto; }
.para-row2 { margin-top: 15px; padding-left: 11px; grid-template-columns: 39px 35px 33px 32px 7px 32px 21px 10px 33px 22px 34px auto; }
.combo {
  height: 34px; background: #fff; border: 1px solid #c8c6c4; display: flex; align-items: center;
  justify-content: space-between; padding: 1px 4px 0 2px; font-size: 16.500px; color: #252423; white-space: nowrap;
}
.combo-font { width: 161px; }
.combo-size { width: 64px; }
.sep { width: 1px; height: 34px; background: #c8c6c4; display: block; }
.grow-a, .shrink-a { display: flex; align-items: flex-start; color: #444; line-height: 1; }
.grow-a { font-size: 25px; }
.shrink-a { font-size: 22px; }
.mini { margin-top: 2px; }
.case { font-size: 18px; color: #444; letter-spacing: 1px; }
.clear { display: flex; align-items: flex-end; }
.clear-a { font-size: 24px; line-height: 30px; color: #444; }
.clear svg { margin-left: -5px; margin-bottom: 2px; }
.fmt { font-family: "Noto Sans", sans-serif; font-size: 18px; color: #333; line-height: 1; }
.fmt-i { font-family: "Liberation Serif", serif; font-size: 20px; }
.fmt-ab { text-decoration-thickness: 1px; font-size: 19px; }
.fmt-b { font-weight: 700; font-size: 18px; }
sub, sup { font-size: 12px; color: #2e8fd6; font-weight: 400; line-height: 0; }
.fx-a { font-size: 30px; font-weight: 700; color: #e8e7e6; -webkit-text-stroke: 1px #a8a6a4; line-height: 1; }
.color-a { display: flex; flex-direction: column; align-items: center; width: 24px; font-size: 24px; line-height: 22px; color: #444; }
.color-bar { display: block; width: 24px; height: 6px; background: #f00; margin-top: 0; }
.mini-num { font: 700 9.500px "Noto Sans", sans-serif; fill: #2e8fd6; }
.sort-a { font: 700 15px "Noto Sans", sans-serif; fill: #2e8fd6; }
.sort-z { font: 400 16px "Noto Sans", sans-serif; fill: #444; }
.pilcrow { font-size: 24px; line-height: 1; font-weight: 700; color: #444; }
.align-on {
  width: 32px; height: 34px; background: #cfcdcb; border: 1px solid #8a8886;
  display: flex; align-items: center; justify-content: center;
}

.g-styles .body { padding: 3px 0 0 12px; }
.gallery {
  width: 458px; height: 90px; background: #fff; border: 1px solid #d2d0ce; padding-left: 2px;
  display: flex; align-items: flex-start; overflow: hidden;
}
.style {
  width: 110px; height: 85px; flex: none; display: flex; flex-direction: column; align-items: center;
  padding-top: 8px; overflow: hidden;
}
.style-normal { width: 106px; border: 5px solid #c8c6c4; outline: 1px solid #8a8886; outline-offset: -1px; padding-top: 0; margin-right: 1px; margin-top: 1px; }
.style-nospace { width: 107px; }
.style-h2 { width: 108px; }
.sample { height: 48px; line-height: 48px; white-space: nowrap; display: block; }
.s-normal { font: 19.500px/48px Lato, sans-serif; color: #000; }
.s-h1 { font: 700 48px/48px "Liberation Serif", serif; color: #000; margin-top: -5px; margin-bottom: 5px; }
.s-h2 { font: 21.500px/48px Lato, sans-serif; color: #2e74b5; width: 90px; overflow: hidden; align-self: flex-start; margin-left: 8px; }
.style-name { font-size: 16.500px; color: #484644; line-height: 24px; margin-top: 1px; white-space: nowrap; }
.style-normal .sample { margin-top: 2px; }
.gallery-scroll { width: 23px; flex: none; height: 88px; margin-left: 0; display: flex; flex-direction: column; }
.gs { flex: 1; display: flex; align-items: center; justify-content: center; border: 1px solid #8a8886; background: #f3f2f1; }
.gs-up { border-color: #d2d0ce; }

.edit-body { padding-left: 13px; margin-top: -1px; height: 117px; }
.edit-row { height: 34px; display: flex; align-items: center; font-size: 16.500px; color: #3b3a39; gap: 5.500px; }
.edit-row .chev { margin-left: 10px; }
.edit-row svg:first-child { margin-left: 1px; width: 24px; }
.edit-row .sel-text + .chev { margin-left: 0; }
.rep-b { font: 15px "Noto Sans", sans-serif; fill: #b146c2; }
.rep-c { font: 14px "Noto Sans", sans-serif; fill: #2e8fd6; }
.muted .big-label { color: #b3b0ad; margin-top: 5px; }
.muted .chev { color: #b3b0ad; margin-top: 8px; }
.g-editor .big-label, .g-addins .big-label { margin-top: 5px; }
.g-addins .big { padding-top: 6px; }
.g-addins .big-label { margin-top: 7px; }

/* document */
.workspace {
  flex: none; height: 736px; background: #e6e6e6; display: grid; grid-template-columns: 335px 1224px 1fr;
}
.page {
  background: #fff; border-left: 1px solid #c6c6c6; border-right: 1px solid #c6c6c6; padding-left: 143px;
  overflow: hidden; color: #000; font-family: Lato, "Noto Sans", sans-serif;
}
.page h1 { font-weight: 400; font-size: 29px; letter-spacing: .2px; line-height: 47px; margin: 0; white-space: nowrap; }
.page .h-first { margin-top: 33px; }
.page .h-second { margin-top: 54px; margin-bottom: 7px; }
.page p { margin: 0; font-size: 22px; letter-spacing: .13px; line-height: 47.600px; white-space: nowrap; }
.ast { font-size: 27px; line-height: 20px; letter-spacing: .2px; vertical-align: -4px; }
.url { letter-spacing: .55px; }
.err { text-decoration: underline wavy #e0201c 1px; text-underline-offset: 4px; }
.gram { text-decoration: underline double #2b5fcf 1px; text-underline-offset: 4px; }
.side { display: flex; justify-content: flex-end; }
.scrollbar { width: 26px; background: #f1f1f1; padding-right: 1px; display: flex; flex-direction: column; }
.sb-btn {
  height: 24px; width: 25px; margin-top: 1px; background: #fff; border: 1px solid #8f8f8f;
  display: flex; align-items: center; justify-content: center;
}
.tri-up { border: 6px solid transparent; border-top: 0; border-bottom: 6px solid #222; }
.tri-down { border: 6px solid transparent; border-bottom: 0; border-top: 6px solid #222; }
.sb-thumb { height: 103px; width: 25px; margin-top: 246px; background: #fff; border: 1px solid #8f8f8f; }
.sb-down { margin-top: auto; margin-bottom: 3px; }

/* status bar */
.status {
  height: 33px; flex: none; background: #f3f2f1; border-top: 1px solid #c6c6c6; border-bottom: 2px solid #bfb9ad;
  display: grid; align-items: center; justify-items: start; padding-left: 16px; font-size: 14.800px; color: #484644;
  grid-template-columns: 105px 101px 51px 1120px 101px 41px 80px 48px 20px 156px 31px auto; white-space: nowrap;
}
.st-inline { display: flex; align-items: center; gap: 4px; }
.view-on { width: 60px; height: 30px; background: #d0cfcd; display: flex; align-items: center; justify-content: center; }
.zoom-track { width: 148px; height: 2px; background: #444; position: relative; display: flex; justify-content: center; }
.zoom-thumb { display: block; width: 8px; height: 16px; background: #444; margin-top: -7px; margin-left: 0; }

/* taskbar */
.taskbar {
  height: 71px; flex: none; display: flex; justify-content: space-between; align-items: flex-start;
  background: linear-gradient(90deg, #ead9d1 0%, #ecdccc 25%, #efdfba 50%, #f4ecb4 64%, #eadbcb 74%, #dedcd4 85%, #d9dae6 100%);
}
.task-icons { display: flex; gap: 30.130px; padding-left: 73px; padding-top: 17px; }
.ti { position: relative; width: 36px; height: 36px; display: block; }
.dot::after {
  content: ""; position: absolute; left: 14px; top: 44px; width: 9px; height: 5px; border-radius: 3px; background: #7b766c;
}
.ti-letter { font: 700 14px "Noto Sans", sans-serif; fill: #fff; text-anchor: middle; }
.badge {
  position: absolute; left: 22px; top: -6px; width: 22px; height: 22px; border-radius: 50%; background: #c42b1c;
  color: #fff; font: 14px/22px "Noto Sans", sans-serif; text-align: center;
}
.tray {
  display: grid; grid-template-columns: 44px 48px 37px 35px 49px 106px 20px; padding-right: 32px;
  align-items: center; justify-items: start; height: 70px;
}
.clock { width: 93px; font-size: 17px; line-height: 25px; text-align: right; color: #222; display: flex; flex-direction: column; }
```
